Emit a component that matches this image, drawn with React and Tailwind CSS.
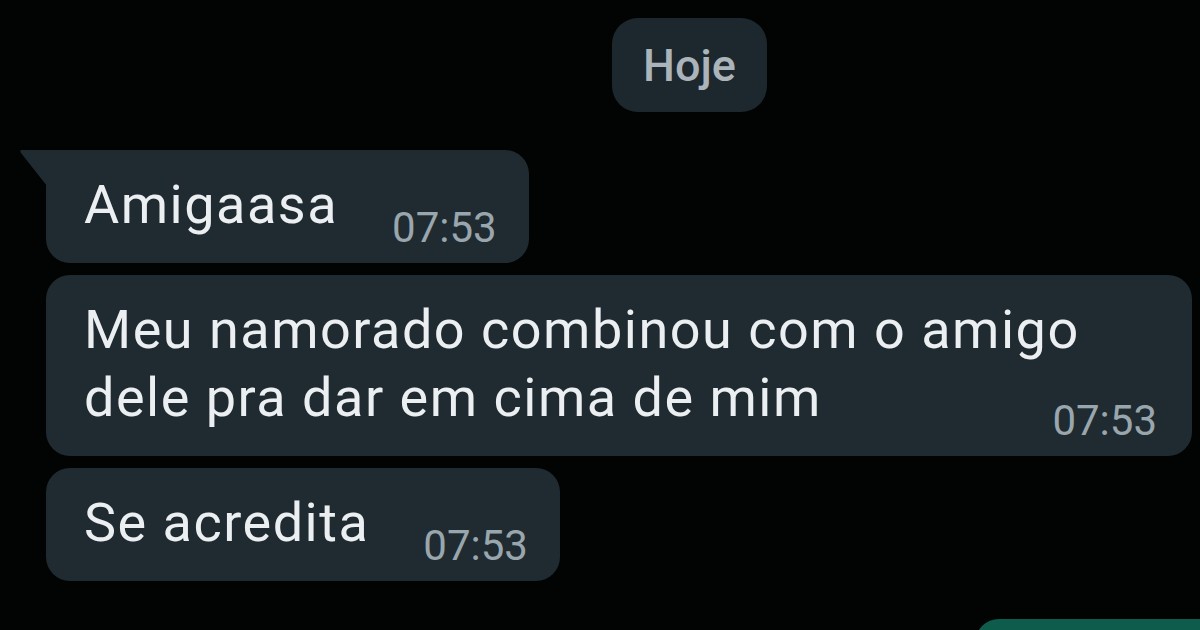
import React from "react";

const messages = [
  { id: 1, text: ["Amigaasa"], time: "07:53", tail: true },
  {
    id: 2,
    text: ["Meu namorado combinou com o amigo", " dele pra dar em cima de mim"],
    time: "07:53",
    wide: true,
  },
  { id: 3, text: ["Se acredita"], time: "07:53" },
];

const Bubble = ({ msg }) => (
  <div
    className={`relative flex bg-[#1f2b31] pl-[38px] pt-[21px] pb-[24px] rounded-[24px] ${
      msg.wide ? "w-full flex-col pr-[35px]" : "w-fit items-end pr-[32px]"
    } ${msg.tail ? "rounded-tl-none" : ""}`}
  >
    {/* Pointe de la bulle */}
    {msg.tail && (
      <svg
        className="absolute left-[-27px] top-0"
        width="28"
        height="36"
        viewBox="0 0 28 36"
      >
        <path d="M28 0 L3 0 Q0 0 2 3 L28 36 Z" fill="#1f2b31" />
      </svg>
    )}
    <p className="text-[54px] leading-[68px] tracking-[1.5px] text-[#eceff1]">
      {msg.text.map((part, i) => (
        <span key={i}>{part}</span>
      ))}
    </p>
    <span
      className={`shrink-0 text-[42px] leading-[42px] text-[#9aa6ad] mb-[-10px] ${
        msg.wide ? "self-end mt-[-32px]" : "ml-[54px]"
      }`}
    >
      {msg.time}
    </span>
  </div>
);

const App = () => {
  return (
    <div
      className="h-[630px] w-[1200px] overflow-hidden bg-[#020303] pl-[46px] pr-[8px] pt-[18px]"
      style={{ fontFamily: "Roboto, 'Noto Sans', sans-serif" }}
    >
      {/* Date */}
      <div className="pl-[566px]">
        <div className="flex h-[94px] w-[155px] items-center justify-center rounded-[26px] bg-[#1d282e]">
          <span className="text-[45px] font-medium leading-none text-[#aab4ba]">Hoje</span>
        </div>
      </div>

      {/* Messages */}
      <div className="mt-[38px] flex flex-col gap-[12px]">
        {messages.map((msg) => (
          <Bubble key={msg.id} msg={msg} />
        ))}
      </div>

      {/* Message envoyé */}
      <div className="mr-[-8px] mt-[38px] flex justify-end">
        <div className="h-[80px] w-[225px] rounded-tl-[24px] bg-[#0d5c4c]"></div>
      </div>
    </div>
  );
};

export default App;
